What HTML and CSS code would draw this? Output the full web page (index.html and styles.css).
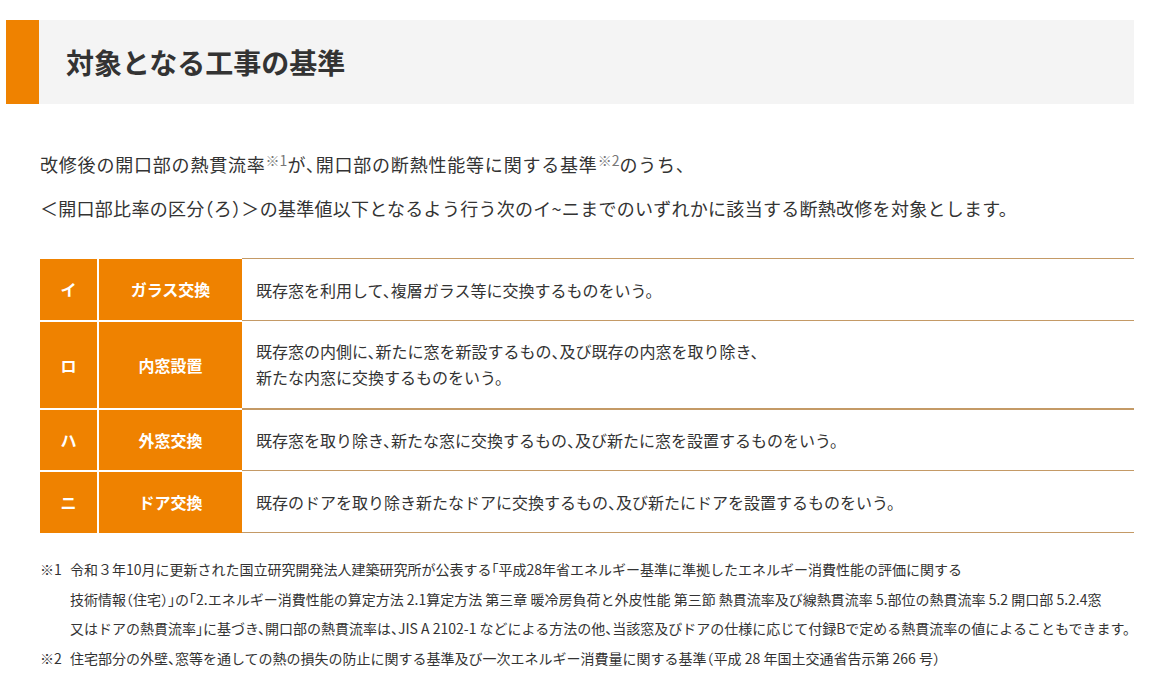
FILE: index.html
```html
<!DOCTYPE html>
<html lang="ja">
  <head>
    <meta charset="utf-8">
    <title>対象となる工事の基準</title>
    <link rel="stylesheet" href="styles.css">
  </head>
  <body>
    <div class="section">
      <h2 class="heading">対象となる工事の基準</h2>
      <p class="lead">
        <span class="first">改修後の開口部の熱貫流率<sup>※1</sup>が、開口部の断熱性能等に関する基準<sup>※2</sup>のうち、</span><br>
        ＜開口部比率の区分（ろ）＞の基準値以下となるよう行う次のイ~ニまでのいずれかに該当する断熱改修を対象とします。
      </p>
      <table class="works">
        <tr>
          <th class="mark">イ</th>
          <th class="name">ガラス交換</th>
          <td>既存窓を利用して、複層ガラス等に交換するものをいう。</td>
        </tr>
        <tr class="tall">
          <th class="mark">ロ</th>
          <th class="name">内窓設置</th>
          <td>既存窓の内側に、新たに窓を新設するもの、及び既存の内窓を取り除き、<br>新たな内窓に交換するものをいう。</td>
        </tr>
        <tr>
          <th class="mark">ハ</th>
          <th class="name">外窓交換</th>
          <td>既存窓を取り除き、新たな窓に交換するもの、及び新たに窓を設置するものをいう。</td>
        </tr>
        <tr>
          <th class="mark">ニ</th>
          <th class="name">ドア交換</th>
          <td>既存のドアを取り除き新たなドアに交換するもの、及び新たにドアを設置するものをいう。</td>
        </tr>
      </table>
      <ul class="notes">
        <li>
          <span class="num">※1</span>
          <span class="text">令和３年10月に更新された国立研究開発法人建築研究所が公表する「平成28年省エネルギー基準に準拠したエネルギー消費性能の評価に関する<br>技術情報（住宅）」の「2.エネルギー消費性能の算定方法 2.1算定方法 第三章 暖冷房負荷と外皮性能 第三節 熱貫流率及び線熱貫流率 5.部位の熱貫流率 5.2 開口部 5.2.4窓<br>又はドアの熱貫流率」に基づき、開口部の熱貫流率は、JIS A 2102-1 などによる方法の他、当該窓及びドアの仕様に応じて付録Bで定める熱貫流率の値によることもできます。</span>
        </li>
        <li>
          <span class="num">※2</span>
          <span class="text">住宅部分の外壁、窓等を通しての熱の損失の防止に関する基準及び一次エネルギー消費量に関する基準（平成 28 年国土交通省告示第 266 号）</span>
        </li>
      </ul>
    </div>
  </body>
</html>
```

FILE: styles.css
```css
body {
  margin: 0;
  background-color: #fff;
  color: #333;
  font-family: "Noto Sans CJK JP", "Noto Sans", sans-serif;
  font-feature-settings: "halt";
}
.section {
  padding: 20px 15px 0 6px;
}
.heading {
  margin: 0;
  height: 84px;
  padding-left: 27px;
  display: flex;
  align-items: center;
  background-color: #f4f4f4;
  border-left: 33px solid #ef8200;
  font-size: 28px;
  font-weight: bold;
  color: #333;
}
.lead {
  margin: 38px 0 0 34px;
  font-size: 18px;
  line-height: 44px;
  letter-spacing: 0.28px;
}
.lead .first {
  letter-spacing: 0.8px;
}
.lead sup {
  font-size: 14px;
  color: #777;
  line-height: 1;
  letter-spacing: 0;
  vertical-align: 6px;
}
.works {
  margin: 28px 0 0 34px;
  width: calc(100% - 34px);
  border-collapse: collapse;
}
.works tr {
  height: 62px;
}
.works tr.tall {
  height: 88px;
}
.works th {
  background-color: #ef8200;
  color: #fff;
  font-size: 16px;
  font-weight: bold;
  border: 2px solid #fff;
  border-left: none;
}
.works tr:first-child th {
  border-top: none;
}
.works tr:last-child th {
  border-bottom: none;
}
.works th.mark {
  width: 55px;
}
.works th.name {
  width: 141px;
  border-right: none;
}
.works td {
  padding: 0 14px;
  font-size: 16px;
  line-height: 26px;
  border-top: 1px solid #c49a66;
  border-bottom: 1px solid #c49a66;
}
.works tr.tall td {
  border-bottom: 2px solid #c49a66;
}
.notes {
  list-style: none;
  margin: 22px 0 0 34px;
  padding: 0;
  font-size: 14px;
  line-height: 29.5px;
}
.notes li {
  display: flex;
}
.notes .num {
  width: 30px;
  flex: none;
}
```
